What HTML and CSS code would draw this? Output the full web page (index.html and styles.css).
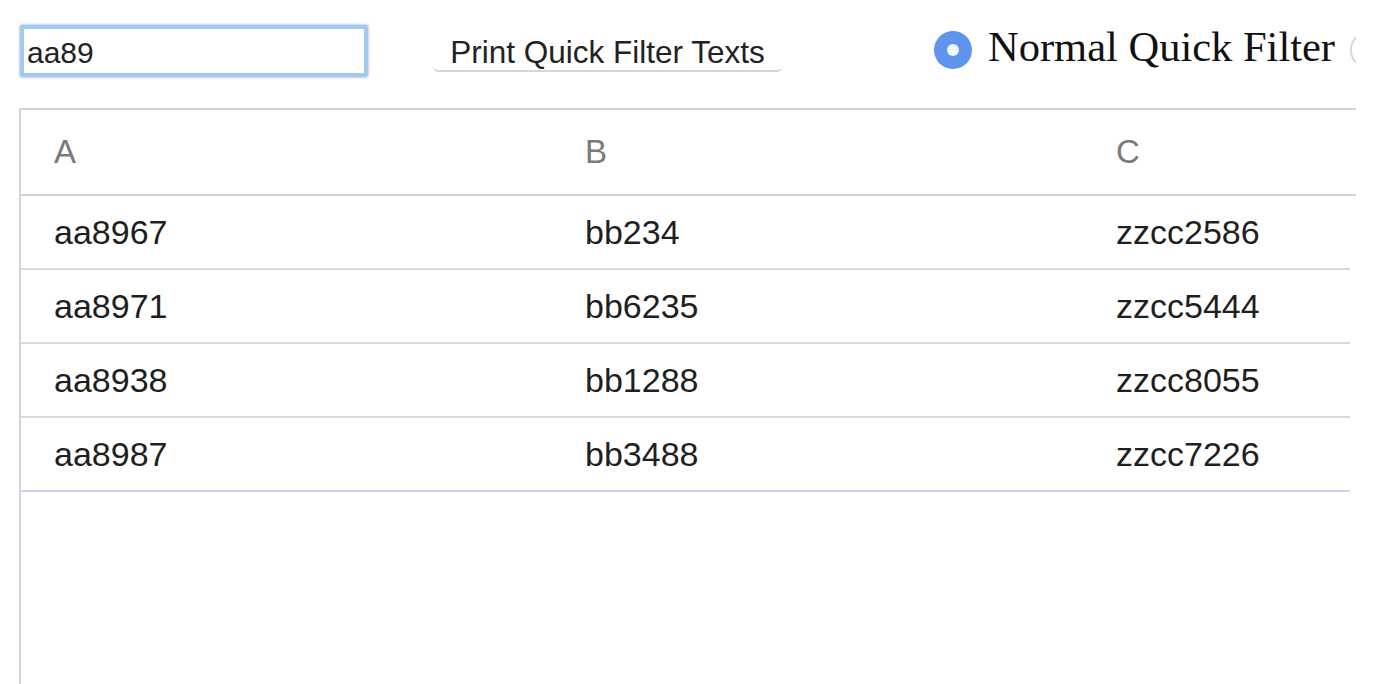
FILE: index.html
```html
<!DOCTYPE html>
<html>
<head>
<meta charset="utf-8">
<link rel="stylesheet" href="styles.css">
</head>
<body>
<div class="page">
  <div class="toolbar">
    <div class="filter-input">aa89</div>
    <div class="print-btn">Print Quick Filter Texts</div>
    <div class="radio checked"><span class="dot"></span></div>
    <div class="radio-label">Normal Quick Filter</div>
    <div class="radio unchecked"></div>
  </div>
  <div class="grid">
    <div class="header">
      <div class="cell head">A</div>
      <div class="cell head">B</div>
      <div class="cell head">C</div>
    </div>
    <div class="row">
      <div class="cell">aa8967</div>
      <div class="cell">bb234</div>
      <div class="cell">zzcc2586</div>
    </div>
    <div class="row">
      <div class="cell">aa8971</div>
      <div class="cell">bb6235</div>
      <div class="cell">zzcc5444</div>
    </div>
    <div class="row">
      <div class="cell">aa8938</div>
      <div class="cell">bb1288</div>
      <div class="cell">zzcc8055</div>
    </div>
    <div class="row last">
      <div class="cell">aa8987</div>
      <div class="cell">bb3488</div>
      <div class="cell">zzcc7226</div>
    </div>
  </div>
</div>
</body>
</html>
```

FILE: styles.css
```css
html, body {
  margin: 0;
  padding: 0;
  background: #ffffff;
}

.page {
  width: 1356px;
  height: 684px;
  overflow: hidden;
  font-family: "Liberation Sans", Arial, sans-serif;
  color: #1f1f1f;
}

.toolbar {
  display: flex;
  align-items: flex-start;
  height: 108px;
  padding-left: 20px;
  white-space: nowrap;
}

.toolbar > * {
  flex: none;
}

.filter-input {
  box-sizing: border-box;
  width: 348px;
  height: 52px;
  margin-top: 25px;
  border: 4px solid #a3c9ec;
  border-radius: 3px;
  box-shadow: 0 0 2px 1px #c4cdf6;
  padding: 2px 3px 0;
  font-size: 30px;
  line-height: 44px;
  color: #222;
  background: #fff;
}

.print-btn {
  box-sizing: border-box;
  width: 349px;
  height: 44px;
  margin-top: 28px;
  margin-left: 65px;
  padding-top: 6px;
  border-bottom: 2px solid #d6d6d6;
  border-radius: 5px;
  text-align: center;
  font-size: 31.5px;
  line-height: 37px;
  color: #222;
}

.radio {
  box-sizing: border-box;
  width: 38px;
  height: 38px;
  border-radius: 50%;
  margin-top: 31px;
}

.radio.checked {
  margin-left: 152px;
  background: #5f93ee;
  display: flex;
  align-items: center;
  justify-content: center;
}

.radio.checked .dot {
  width: 12px;
  height: 12px;
  border-radius: 50%;
  background: #eef8fd;
}

.radio.unchecked {
  margin-left: 15px;
  border: 2px solid #d8d8d8;
  background: #fff;
}

.radio-label {
  margin-left: 16px;
  margin-top: 22px;
  font-family: "Liberation Serif", "Times New Roman", serif;
  font-size: 42.5px;
  color: #111;
}

.grid {
  margin-left: 19px;
  height: 600px;
  border-left: 2px solid #d4d4d4;
  border-top: 2px solid #d4d4d4;
}

.header {
  display: flex;
  height: 84px;
  border-bottom: 2px solid #d4d4d4;
  width: 1400px;
}

.row {
  display: flex;
  height: 72px;
  width: 1329px;
  border-bottom: 2px solid #d8d8d8;
}

.row.last {
  border-bottom-color: #cdd2f6;
}

.cell {
  flex: none;
  box-sizing: border-box;
  width: 531px;
  padding-left: 33px;
  display: flex;
  align-items: center;
  font-size: 34px;
  color: #1f1f1f;
}

.cell.head {
  font-size: 33px;
  color: #7a7a7a;
}
```
